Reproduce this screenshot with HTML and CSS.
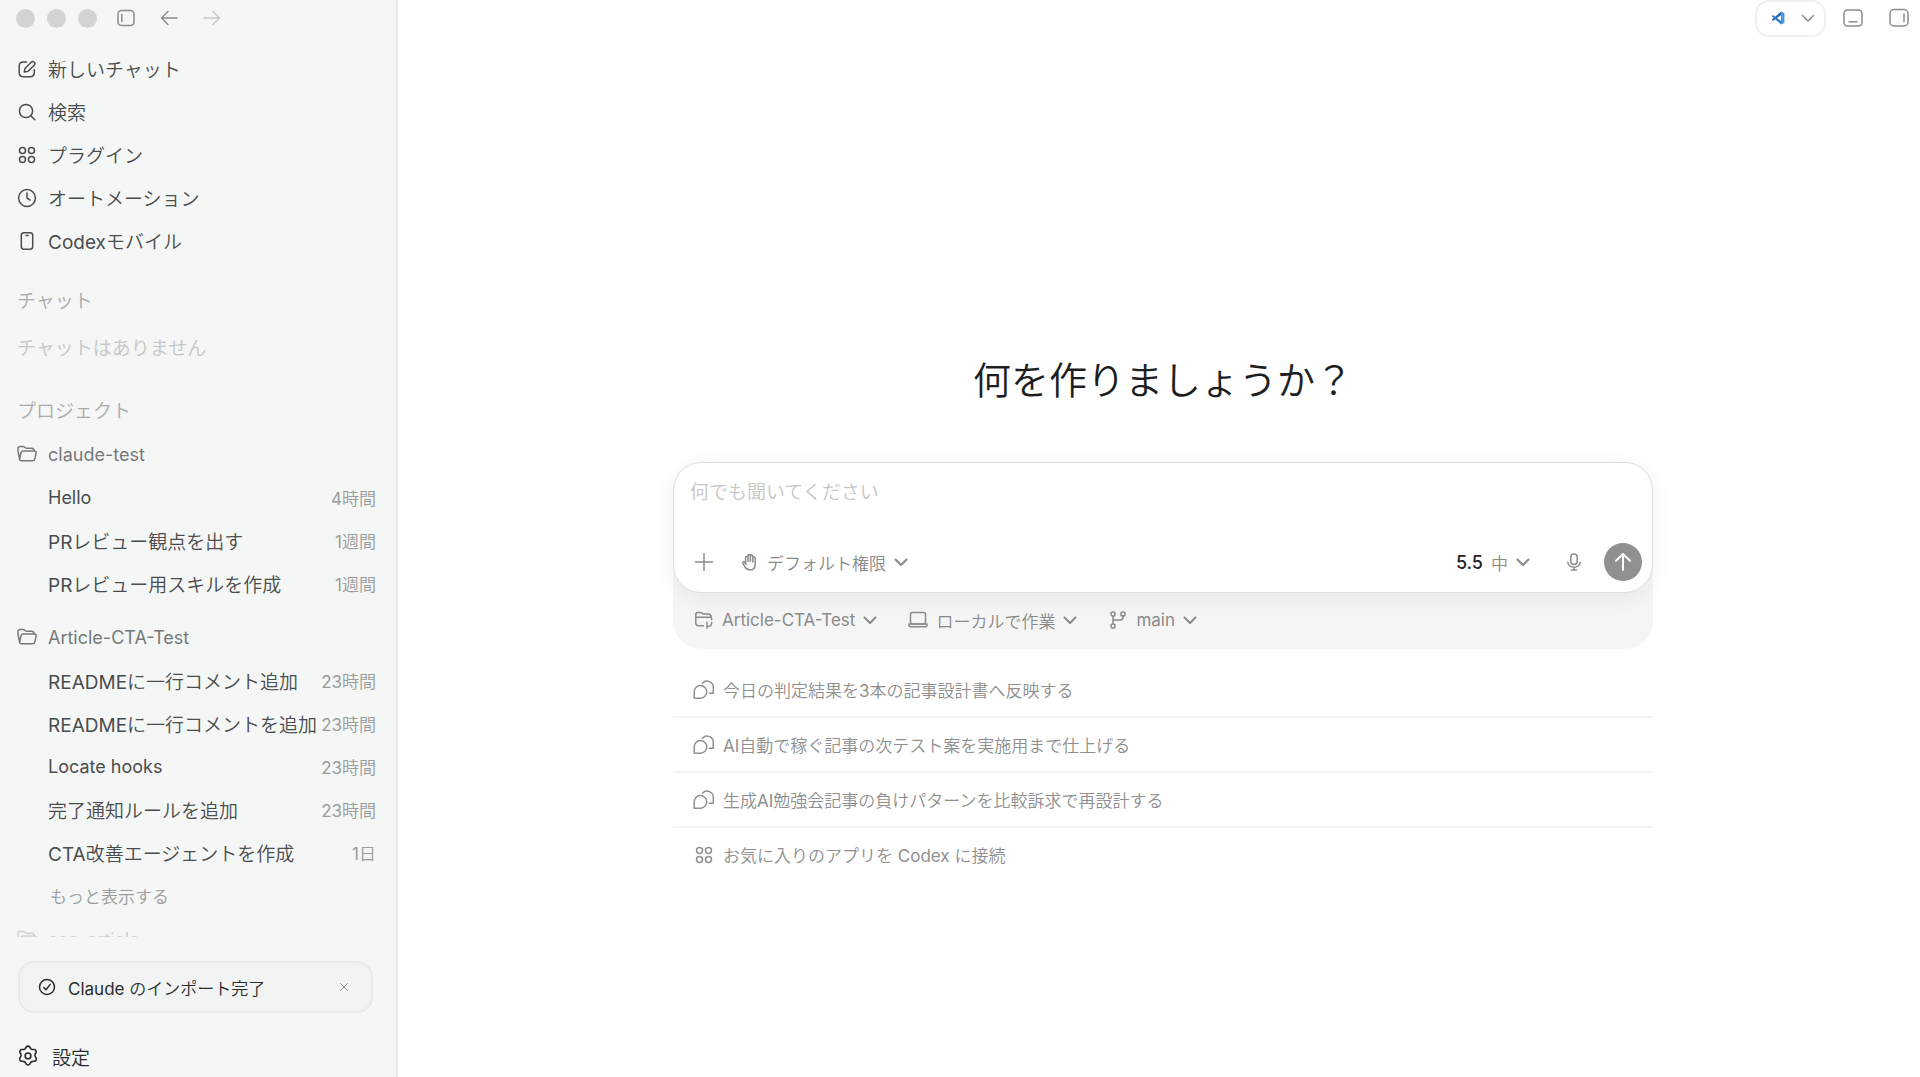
FILE: index.html
```html
<!DOCTYPE html>
<html lang="ja">
<head>
<meta charset="utf-8">
<title>Codex</title>
<link rel="stylesheet" href="styles.css">
</head>
<body>
<svg class="sprite" aria-hidden="true">
  <symbol id="chevron" viewBox="0 0 14 14"><path d="M1.5 4.5 7 10l5.500-5.500"/></symbol>
  <symbol id="grid" viewBox="0 0 20 20"><circle cx="5.500" cy="5.500" r="3"/><circle cx="14.500" cy="5.500" r="3"/><circle cx="5.500" cy="14.500" r="3"/><circle cx="14.500" cy="14.500" r="3"/></symbol>
  <symbol id="folder" viewBox="0 0 20 20"><path d="M2.600 15.500 1 7V4.500C1 3.200 1.800 2.600 3 2.600h3.200c1.600 0 2 1.700 3.600 1.700h4.700c1.700 0 2.600.8 2.800 2.700M2.600 15.500 4 8.700C4.300 7.500 5 7 6 7h11.300c1.500 0 2.100.8 1.800 2.100l-1.200 5.700c-.3 1.400-1 2-2.300 2H4.200c-1.100 0-1.500-.5-1.600-1.300Z"/></symbol>
  <symbol id="chats" viewBox="0 0 22 20"><path d="M1.200 18.200V12a6.300 6.300 0 1 1 6.300 6.200Z"/><path d="M9.500 3.200a6.200 6.200 0 0 1 10.800 4.300v5.700h-4"/></symbol>
</svg>
<div class="app">
  <aside class="sidebar">
    <div class="titlebar">
      <span class="dot"></span><span class="dot"></span><span class="dot"></span>
      <button class="icon-btn" aria-label="サイドバー"><svg class="i20" viewBox="0 0 20 20"><rect x="2" y="2.500" width="16" height="15" rx="3.500"/><path d="M5.800 6.500v7"/></svg></button>
      <button class="icon-btn back" aria-label="戻る"><svg class="i20" viewBox="0 0 20 20"><path d="M18 10H2.500M9 3.500 2.500 10 9 16.500"/></svg></button>
      <button class="icon-btn forward" aria-label="進む"><svg class="i20" viewBox="0 0 20 20"><path d="M2 10h15.500M11 3.500l6.500 6.500-6.500 6.500"/></svg></button>
    </div>
    <nav class="nav">
      <a href="#"><svg class="i20" viewBox="0 0 20 20"><path d="M9.500 3H6.500C3.500 3 2.200 4.200 2.200 7v6.500c0 2.800 1.300 4.200 4.200 4.200H13c3 0 4.300-1.400 4.300-4.200v-2.700"/><path d="m7.300 12.900.5-2.700c.1-.5.3-.8.7-1.200l5.700-5.800a2.100 2.100 0 0 1 3 3L11.300 12c-.4.400-.7.500-1.200.6Z"/></svg>新しいチャット</a>
      <a href="#"><svg class="i20" viewBox="0 0 20 20"><circle cx="9" cy="9" r="6.600"/><path d="m13.800 13.800 4 4"/></svg>検索</a>
      <a href="#"><svg class="i20"><use href="#grid"/></svg>プラグイン</a>
      <a href="#"><svg class="i20" viewBox="0 0 20 20"><circle cx="10" cy="10" r="8.400"/><path d="M10 5v5.200l3 1.800"/></svg>オートメーション</a>
      <a href="#"><svg class="i20" viewBox="0 0 20 20"><rect x="4.300" y="1.800" width="11.400" height="16.400" rx="2.600"/><path d="M9 4.500h2"/></svg>Codexモバイル</a>
    </nav>
    <div class="lists">
      <h2 class="label">チャット</h2>
      <p class="empty">チャットはありません</p>
      <h2 class="label projects">プロジェクト</h2>
      <section class="project">
        <a class="folder" href="#"><svg class="i20"><use href="#folder"/></svg><span class="latin">claude-test</span></a>
        <a class="thread" href="#"><span class="latin">Hello</span><time>4時間</time></a>
        <a class="thread" href="#"><span>PRレビュー観点を出す</span><time>1週間</time></a>
        <a class="thread" href="#"><span>PRレビュー用スキルを作成</span><time>1週間</time></a>
      </section>
      <section class="project spaced">
        <a class="folder" href="#"><svg class="i20"><use href="#folder"/></svg><span class="latin">Article-CTA-Test</span></a>
        <a class="thread" href="#"><span>READMEに一行コメント追加</span><time>23時間</time></a>
        <a class="thread" href="#"><span>READMEに一行コメントを追加</span><time>23時間</time></a>
        <a class="thread" href="#"><span class="latin">Locate hooks</span><time>23時間</time></a>
        <a class="thread" href="#"><span>完了通知ルールを追加</span><time>23時間</time></a>
        <a class="thread" href="#"><span>CTA改善エージェントを作成</span><time>1日</time></a>
        <button class="more">もっと表示する</button>
      </section>
      <section class="project">
        <a class="folder faded" href="#"><svg class="i20"><use href="#folder"/></svg><span class="latin">seo-article</span></a>
      </section>
    </div>
    <div class="toast">
      <svg class="i18" viewBox="0 0 18 18"><circle cx="9" cy="9" r="7.500"/><path d="m5.800 9.600 2.200 2.200 4.200-5.400"/></svg>
      <span>Claude のインポート完了</span>
      <button class="icon-btn close" aria-label="閉じる"><svg class="i10" viewBox="0 0 10 10"><path d="m1.500 1.500 7 7m0-7-7 7"/></svg></button>
    </div>
    <a class="settings" href="#"><svg class="i22" viewBox="1 .4 20 20"><path d="M9.300 2.400a2 2 0 0 1 3.400 0l.7 1.200c.4.600 1 .9 1.700.9h1.300a2 2 0 0 1 1.800 3l-.7 1.200c-.3.700-.3 1.300 0 1.900l.8 1.500a2 2 0 0 1-1.700 3.100l-1.400.1c-.7 0-1.300.3-1.700.9l-.8 1.300a2 2 0 0 1-3.400 0l-.8-1.300c-.4-.6-1-.9-1.700-.9l-1.400-.1a2 2 0 0 1-1.700-3.100l.8-1.500c.3-.600.3-1.200 0-1.900l-.7-1.200a2 2 0 0 1 1.800-3h1.300c.7 0 1.300-.3 1.700-.9Z"/><circle cx="11" cy="10.300" r="2.600"/></svg>設定</a>
  </aside>
  <main class="main">
    <header class="topbar">
      <button class="editor" aria-label="VS Code で開く">
        <svg class="i16" viewBox="-1 -1 18 18"><path class="vs-b" d="M11.500.8 1 9.900l1.400 1.500L11.500 4.600Z"/><path class="vs-a" d="M11.500 15.200 1 6.100l1.400-1.500 9.100 6.800Z"/><path class="vs-c" d="M11.300.6 15.200 2.500v11L11.300 15.400Z"/></svg>
        <svg class="i14"><use href="#chevron"/></svg>
      </button>
      <button class="icon-btn" aria-label="ターミナル"><svg class="i20" viewBox="0 0 20 20"><rect x="1" y="2" width="18" height="16" rx="3.500"/><path d="M6 13.700h8"/></svg></button>
      <button class="icon-btn" aria-label="サイドパネル"><svg class="i20" viewBox="0 0 20 20"><rect x="1" y="1.500" width="18" height="16.500" rx="4"/><path d="M15 6v7.500"/></svg></button>
    </header>
    <div class="content">
      <h1>何を作りましょうか？</h1>
      <form class="box">
        <div class="composer">
          <textarea rows="1" aria-label="メッセージ" placeholder="何でも聞いてください"></textarea>
          <div class="tools">
            <button type="button" class="icon-btn" aria-label="追加"><svg class="i20" viewBox="0 0 20 20"><path d="M10 1.500v17M1.500 10h17"/></svg></button>
            <button type="button" class="pick"><svg class="i18" viewBox="0 0 18 18"><path d="M4.600 10.400V4.600a1.200 1.200 0 0 1 2.400 0v4-5.800a1.200 1.200 0 0 1 2.400 0v5.700-5.300a1.200 1.200 0 0 1 2.400 0v5.700-3.800a1.200 1.200 0 0 1 2.400 0V11c0 3.700-2 6-5.300 6-2.700 0-4.100-1.200-5.200-3.300L1.900 10.300c-.5-1.300 1-2 1.700-1.100l1.600 2.300"/></svg>デフォルト権限<svg class="i14 chev"><use href="#chevron"/></svg></button>
            <span class="spacer"></span>
            <button type="button" class="pick model"><strong>5.5</strong><span>中</span><svg class="i14"><use href="#chevron"/></svg></button>
            <button type="button" class="icon-btn mic" aria-label="音声入力"><svg class="i18" viewBox="0 0 18 18"><rect x="5.800" y="1" width="6.400" height="10.500" rx="3.200"/><path d="M2.800 9.200a6.200 5 0 0 0 12.400 0M9 14.200V17M6.500 17h5"/></svg></button>
            <button class="send" aria-label="送信"><svg class="i20" viewBox="0 0 20 20"><path d="M10 18V2M3 8.800 10 2l7 6.800"/></svg></button>
          </div>
        </div>
        <div class="context">
          <button type="button" class="pick"><svg class="i20" viewBox="0 0 20 20"><path d="M9.500 15.700H4.500c-1.800 0-2.700-.9-2.700-2.700V4.600c0-1.400.7-2.100 2-2.100h2.500c1.500 0 1.800 1.400 3.300 1.400h4.700c1.700 0 2.600.7 2.800 2.400M1.800 7.200h14.400c1 0 1.500.4 1.500 1.300v.9"/><path d="M13 18.300v-6m0 4.100c2.500.4 4.700-.6 4.700-3.900"/></svg>Article-CTA-Test<svg class="i14 chev"><use href="#chevron"/></svg></button>
          <button type="button" class="pick"><svg class="i20" viewBox="0 0 20 20"><rect x="2.500" y="2.500" width="15" height="11.500" rx="2"/><path d="M1 14v1.500c0 .8.500 1.300 1.300 1.300h15.400c.8 0 1.300-.5 1.300-1.300V14Z"/></svg>ローカルで作業<svg class="i14 chev"><use href="#chevron"/></svg></button>
          <button type="button" class="pick"><svg class="i20" viewBox="-1 -1 20 20"><circle cx="4" cy="3" r="2.100"/><circle cx="14" cy="3" r="2.100"/><circle cx="4" cy="15" r="2.100"/><path d="M4 5.100v7.800M14 5.100V6.500c0 1.600-.8 2.400-2.400 2.400H4"/></svg>main<svg class="i14 chev"><use href="#chevron"/></svg></button>
        </div>
      </form>
      <ul class="suggestions">
        <li><a href="#"><svg class="i22"><use href="#chats"/></svg>今日の判定結果を3本の記事設計書へ反映する</a></li>
        <li><a href="#"><svg class="i22"><use href="#chats"/></svg>AI自動で稼ぐ記事の次テスト案を実施用まで仕上げる</a></li>
        <li><a href="#"><svg class="i22"><use href="#chats"/></svg>生成AI勉強会記事の負けパターンを比較訴求で再設計する</a></li>
        <li><a href="#"><svg class="i22" viewBox="-1 0 22 20"><use href="#grid" width="20" height="20"/></svg>お気に入りのアプリを Codex に接続</a></li>
      </ul>
    </div>
  </main>
</div>
</body>
</html>
```
FILE: styles.css
```css
* { box-sizing: border-box; }

body {
  margin: 0;
  font-family: Inter, "Noto Sans CJK JP DemiLight", "Noto Sans CJK JP Light", "Noto Sans CJK JP", sans-serif;
  font-size: 19px;
  color: #4a4c4d;
  background: #fff;
}

h1, h2, p, ul { margin: 0; padding: 0; font-weight: 400; }
ul { list-style: none; }
a { color: inherit; text-decoration: none; }

button {
  font: inherit;
  color: inherit;
  background: none;
  border: 0;
  padding: 0;
  display: flex;
  align-items: center;
}

svg {
  flex: none;
  display: block;
  fill: none;
  stroke: currentColor;
  stroke-width: 1.5;
  stroke-linecap: round;
  stroke-linejoin: round;
}

.sprite { position: absolute; width: 0; height: 0; }
.i10 { width: 10px; height: 10px; stroke-width: 1; }
.i14 { width: 14px; height: 14px; }
.i16 { width: 16px; height: 16px; }
.i18 { width: 18px; height: 18px; }
.i20 { width: 20px; height: 20px; }
.i22 { width: 22px; height: 20px; }

.app { display: flex; height: 100vh; }

/* Sidebar */
.sidebar {
  flex: none;
  width: 398px;
  display: flex;
  flex-direction: column;
  background: #f5f7f6;
  border-right: 2px solid #e9ebeb;
}

.titlebar {
  display: flex;
  align-items: center;
  height: 36px;
  padding-left: 16px;
  gap: 12px;
  color: #8b8d8d;
}
.dot { width: 19px; height: 19px; border-radius: 50%; background: #d2d4d3; }
.titlebar .icon-btn { margin-left: 7px; }
.titlebar .back,
.titlebar .forward { margin-left: 11px; }
.titlebar .forward { color: #c6c8c8; }

.nav { display: flex; flex-direction: column; padding: 11px 17px 0; }
.nav a { display: flex; align-items: center; gap: 11px; height: 43px; }

.lists {
  flex: 1;
  min-height: 0;
  overflow: hidden;
  margin-top: 20px;
  margin-bottom: 24px;
  padding: 0 20px 0 17px;
}
.label { height: 40px; line-height: 40px; font-size: 19px; color: #a9abab; }
.empty { height: 49px; line-height: 54px; color: #c4c6c6; }
.label.projects { margin-top: 21px; }

.latin { font-size: 18px; }
.project.spaced { margin-top: 10px; }
.folder { display: flex; align-items: center; gap: 11px; height: 44px; color: #777979; }
.folder.faded { opacity: .3; }
.thread {
  display: flex;
  align-items: center;
  justify-content: space-between;
  height: 43px;
  padding-left: 31px;
  white-space: nowrap;
}
.thread time { font-size: 17px; color: #9a9c9c; }
.more { height: 43px; padding-left: 33px; font-size: 17px; color: #9a9c9c; }

.toast {
  display: flex;
  align-items: center;
  gap: 12px;
  height: 52px;
  margin: 0 23px 0 18px;
  padding: 0 22px 0 18px;
  border: 2px solid #e8eaea;
  border-radius: 16px;
  background: #f2f4f3;
  font-size: 17px;
  color: #2a2c2d;
}
.toast .close { margin-left: auto; color: #8b8d8d; }

.settings {
  display: flex;
  align-items: center;
  gap: 13px;
  height: 42px;
  margin-top: 22px;
  padding-left: 17px;
  color: #2a2c2d;
}
.settings .i22 { height: 22px; }

/* Main */
.main { flex: 1; min-width: 0; display: flex; flex-direction: column; }

.topbar {
  display: flex;
  justify-content: flex-end;
  align-items: center;
  height: 36px;
  padding-right: 11px;
  gap: 26px;
  color: #8b8d8d;
}
.editor {
  height: 37px;
  padding: 0 9px 0 13px;
  gap: 15px;
  margin-right: -9px;
  border: 2px solid #f0f0f0;
  border-radius: 14px;
}
.editor .i16 { stroke: none; }
.vs-a { fill: #2f7cc9; }
.vs-b { fill: #2464ad; }
.vs-c { fill: #4a97e0; }

.content {
  width: 100%;
  max-width: 988px;
  margin: 0 auto;
  padding: 316px 0 0 8px;
}

h1 {
  font-size: 38px;
  line-height: 56px;
  text-align: center;
  color: #1c1e1f;
}

.box { margin-top: 54px; border-radius: 28px; background: #f5f5f5; }
.composer {
  display: flex;
  flex-direction: column;
  justify-content: space-between;
  height: 131px;
  padding: 16px 10px 11px 16px;
  border: 1px solid #dedede;
  border-radius: 28px;
  background: #fff;
  box-shadow: 0 5px 24px rgba(0, 0, 0, .06);
}
textarea {
  width: 100%;
  height: 28px;
  padding: 0;
  border: 0;
  outline: 0;
  resize: none;
  overflow: hidden;
  background: none;
  font: inherit;
  line-height: 28px;
}
textarea::placeholder { color: #c6c6c6; }

.tools { display: flex; align-items: center; color: #8a8a8a; padding-left: 4px; }
.spacer { flex: 1; }
.pick { font-size: 17px; gap: 8px; white-space: nowrap; }
.pick .i14 { stroke-width: 2; }
.tools .pick { margin-left: 27px; }
.model strong { font-weight: 500; font-size: 18px; color: #222; }
.mic { margin: 0 21px 0 35px; }
.send {
  justify-content: center;
  width: 38px;
  height: 38px;
  border-radius: 50%;
  background: #8f9091;
  color: #fff;
}
.send svg { stroke-width: 2; }

.context {
  display: flex;
  align-items: center;
  gap: 31px;
  height: 56px;
  padding: 0 0 2px 21px;
  color: #8a8a8a;
}

.suggestions { margin-top: 14px; }
.suggestions li + li { border-top: 2px solid #f4f4f4; }
.suggestions a {
  display: flex;
  align-items: center;
  gap: 8px;
  height: 53px;
  padding-left: 20px;
  font-size: 17px;
  color: #8f8f8f;
}
```
